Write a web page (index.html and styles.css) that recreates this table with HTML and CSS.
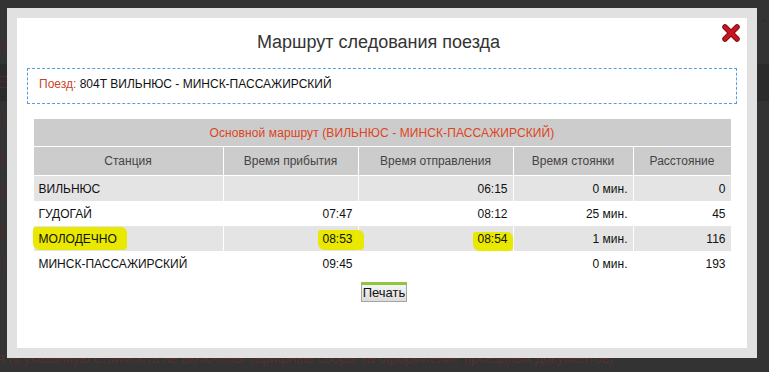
FILE: index.html
```html
<!DOCTYPE html>
<html lang="ru">
<head>
    <meta charset="UTF-8">
    <meta name="viewport" content="width=device-width, initial-scale=1.0">
    <title>Маршрут следования поезда</title>
    <link rel="stylesheet" href="styles.css">
</head>
<body>

    <!-- Page underneath the dialog (dimmed) -->
    <div class="page">
        <div class="page-line dash">- -</div>
        <div class="page-line">о</div>
        <div class="page-line dark">Е</div>
        <div class="page-line">06</div>
        <div class="page-line">15</div>
        <div class="page-line">18</div>
        <div class="page-line">19</div>
        <div class="page-line">22</div>
        <div class="page-note">я (в указанную стоимость не включены тарифные сборы за оформление проездных документов)</div>
    </div>

    <!-- Route dialog -->
    <div class="modal">
        <div class="modal-content">
            <button class="close-modal" title="Закрыть">
                <svg width="18" height="18" viewBox="0 0 18 18">
                    <path d="M3 3 L15 15 M15 3 L3 15" stroke="#7a0c12" stroke-width="5.5" stroke-linecap="round"/>
                    <path d="M3 3 L15 15 M15 3 L3 15" stroke="#cc1420" stroke-width="3.6" stroke-linecap="round"/>
                </svg>
            </button>
            <h1>Маршрут следования поезда</h1>

            <div class="train-info">
                <span class="label">Поезд:</span> 804Т ВИЛЬНЮС - МИНСК-ПАССАЖИРСКИЙ
            </div>

            <table class="route">
                <colgroup>
                    <col style="width: 190px">
                    <col style="width: 135px">
                    <col style="width: 155px">
                    <col style="width: 120px">
                    <col style="width: 98px">
                </colgroup>
                <thead>
                    <tr class="caption-row">
                        <th colspan="5">Основной маршрут (ВИЛЬНЮС - МИНСК-ПАССАЖИРСКИЙ)</th>
                    </tr>
                    <tr>
                        <th>Станция</th>
                        <th>Время прибытия</th>
                        <th>Время отправления</th>
                        <th>Время стоянки</th>
                        <th>Расстояние</th>
                    </tr>
                </thead>
                <tbody>
                    <tr class="odd">
                        <td>ВИЛЬНЮС</td>
                        <td class="num"></td>
                        <td class="num">06:15</td>
                        <td class="num">0 мин.</td>
                        <td class="num">0</td>
                    </tr>
                    <tr>
                        <td>ГУДОГАЙ</td>
                        <td class="num">07:47</td>
                        <td class="num">08:12</td>
                        <td class="num">25 мин.</td>
                        <td class="num">45</td>
                    </tr>
                    <tr class="odd">
                        <td class="marked"><span class="marker marker-station"></span><span class="txt">МОЛОДЕЧНО</span></td>
                        <td class="num marked"><span class="marker marker-arr"></span><span class="txt">08:53</span></td>
                        <td class="num marked"><span class="marker marker-dep"></span><span class="txt">08:54</span></td>
                        <td class="num">1 мин.</td>
                        <td class="num">116</td>
                    </tr>
                    <tr>
                        <td>МИНСК-ПАССАЖИРСКИЙ</td>
                        <td class="num">09:45</td>
                        <td class="num"></td>
                        <td class="num">0 мин.</td>
                        <td class="num">193</td>
                    </tr>
                </tbody>
            </table>

            <div class="actions">
                <button class="print-button">Печать</button>
            </div>
        </div>
    </div>

</body>
</html>
```

FILE: styles.css
```css
/* General Styles */
html, body {
    margin: 0;
    height: 100%;
}

body {
    background-color: #333;
    font-family: 'Liberation Sans', Arial, sans-serif;
    position: relative;
    overflow: hidden;
}

/* Dimmed page behind the dialog */
.page {
    padding-top: 13px;
}

.page-line {
    height: 37px;
    line-height: 37px;
    font-size: 16px;
    color: #4a2c2c;
    margin-left: -3px;
}

.page-line.dark {
    background-color: #2b2b2b;
}

.page-line.dash {
    height: 14px;
    line-height: 14px;
    color: #262a33;
    margin-left: 0;
    text-align: right;
    padding-right: 2px;
}

.page-note {
    position: absolute;
    left: -3px;
    top: 348px;
    font-size: 14px;
    line-height: 20px;
    color: #55302e;
    white-space: nowrap;
    letter-spacing: -0.2px;
}

/* Modal Styles */
.modal {
    position: absolute;
    left: 7px;
    top: 8px;
    width: 730px;
    height: 330px;
    border: 10px solid #e1e1e1;
    background-color: #fff;
}

.modal-content {
    position: relative;
    height: 100%;
    padding: 0 10px;
    box-sizing: border-box;
}

.modal h1 {
    margin: 0;
    padding: 12px 7px 0 0;
    height: 38px;
    line-height: 24px;
    font-size: 18px;
    font-weight: normal;
    text-align: center;
    color: #333;
}

.close-modal {
    position: absolute;
    right: 7px;
    top: 6px;
    padding: 0;
    border: none;
    background: none;
    cursor: pointer;
    line-height: 0;
}

.train-info {
    border: 1px dashed #5b9ee0;
    height: 34px;
    line-height: 31px;
    padding-left: 11px;
    font-size: 12px;
    color: #111;
}

.train-info .label {
    color: #c9452a;
}

/* Table Styles */
.route {
    width: 698px;
    margin: 14px auto 0;
    border-collapse: collapse;
    table-layout: fixed;
    font-size: 12px;
}

.route th, .route td {
    border: 1px solid #fff;
    padding: 0 5px;
}

.route th {
    background-color: #cccccc;
    color: #444;
    font-weight: normal;
    height: 28px;
    text-align: center;
}

.route .caption-row th {
    color: #dd4422;
    letter-spacing: 0.1px;
    height: 27px;
}

.route td {
    height: 25px;
    color: #111;
    border-top: none;
    border-bottom: none;
}

.route tbody tr {
    background-color: #fff;
}

.route tbody tr.odd {
    background-color: #e4e4e4;
}

.route .num {
    text-align: right;
}

/* Highlighter marks */
.marked {
    position: relative;
}

.marked .txt {
    position: relative;
}

.marker {
    position: absolute;
    background-color: #e8e800;
    border-radius: 3px 6px 4px 7px;
}

.marker-station {
    left: -1px;
    top: 1px;
    width: 94px;
    height: 23px;
}

.marker-arr {
    right: -6px;
    top: 4px;
    width: 46px;
    height: 20px;
}

.marker-dep {
    right: 0;
    top: 6px;
    width: 40px;
    height: 19px;
}

/* Print button */
.actions {
    text-align: center;
    margin-top: 6px;
}

.print-button {
    font-family: 'Liberation Sans', Arial, sans-serif;
    font-size: 13px;
    color: #111;
    height: 20px;
    padding: 0 1px;
    border: 1px solid #a5a5a5;
    border-top: 3px solid #8dc63f;
    background: linear-gradient(#f5f5f5, #dcdcdc);
    cursor: pointer;
    margin-left: 4px;
    line-height: 14px;
}
```
